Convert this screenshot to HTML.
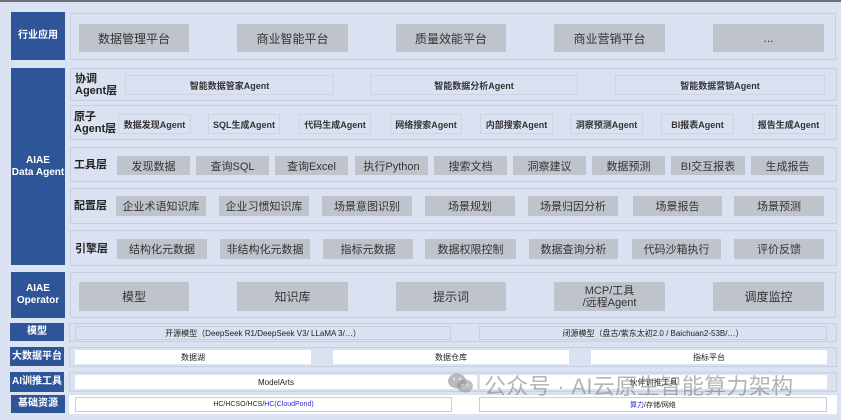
<!DOCTYPE html>
<html><head><meta charset="utf-8"><style>
*{margin:0;padding:0;box-sizing:border-box}
body{width:841px;height:420px;background:#dbe3f2;position:relative;overflow:hidden;font-family:"Liberation Sans","Noto Sans CJK SC",sans-serif;color:#222}
div{position:absolute}
.top{left:0;top:0;width:841px;height:2px;background:#6b6f78}
.L{background:#2e5597;color:#fff;font-weight:bold;font-size:10px;display:flex;align-items:center;justify-content:center;text-align:center;line-height:12px}
.P{border:1px solid #c8cfdc;background:#dae2f1}
.B{background:#bfc3cb;color:#333;display:flex;align-items:center;justify-content:center;text-align:center;font-size:11px}
.big{font-size:12px}
.A{border:1px solid #cdd5e3;display:flex;align-items:center;justify-content:center;font-size:9px;font-weight:bold;color:#333}
.lab{font-weight:bold;font-size:11px;line-height:12px;color:#222}
.W{background:#fff;display:flex;align-items:center;justify-content:center;font-size:8px;color:#222}
.T{border:1px solid #c8cfdc;display:flex;align-items:center;justify-content:center;font-size:8px;color:#222}
.wm{color:rgba(120,120,120,0.55);font-size:22px;white-space:nowrap;letter-spacing:0.3px}
</style></head><body>
<div class="top"></div>

<div class="L" style="left:11px;top:12px;width:54px;height:48px">行业应用</div>
<div class="L" style="left:11px;top:68px;width:54px;height:197px">AIAE<br>Data Agent</div>
<div class="L" style="left:11px;top:272px;width:54px;height:46px">AIAE<br>Operator</div>
<div class="L" style="left:10px;top:323px;width:54px;height:18px">模型</div>
<div class="L" style="left:10px;top:347px;width:54px;height:19px">大数据平台</div>
<div class="L" style="left:10px;top:372px;width:54px;height:20px">AI训推工具</div>
<div class="L" style="left:11px;top:395px;width:54px;height:18px">基础资源</div>

<div class="P" style="left:70px;top:13px;width:766px;height:47px"></div>
<div class="B big" style="left:79px;top:24px;width:110px;height:28px">数据管理平台</div>
<div class="B big" style="left:237px;top:24px;width:111px;height:28px">商业智能平台</div>
<div class="B big" style="left:396px;top:24px;width:110px;height:28px">质量效能平台</div>
<div class="B big" style="left:554px;top:24px;width:111px;height:28px">商业营销平台</div>
<div class="B big" style="left:713px;top:24px;width:111px;height:28px">...</div>

<div class="P" style="left:70px;top:68px;width:767px;height:33px"></div>
<div class="lab" style="left:75px;top:73px">协调<br>Agent层</div>
<div class="A" style="left:125px;top:75px;width:209px;height:20px">智能数据管家Agent</div>
<div class="A" style="left:370px;top:75px;width:208px;height:20px">智能数据分析Agent</div>
<div class="A" style="left:615px;top:75px;width:210px;height:20px">智能数据营销Agent</div>

<div class="P" style="left:70px;top:105px;width:767px;height:35px"></div>
<div class="lab" style="left:74px;top:111px">原子<br>Agent层</div>
<div class="A" style="left:118px;top:114px;width:73px;height:20px">数据发现Agent</div>
<div class="A" style="left:208px;top:114px;width:72px;height:20px">SQL生成Agent</div>
<div class="A" style="left:299px;top:114px;width:72px;height:20px">代码生成Agent</div>
<div class="A" style="left:390px;top:114px;width:72px;height:20px">网络搜索Agent</div>
<div class="A" style="left:480px;top:114px;width:73px;height:20px">内部搜索Agent</div>
<div class="A" style="left:570px;top:114px;width:73px;height:20px">洞察预测Agent</div>
<div class="A" style="left:661px;top:114px;width:73px;height:20px">BI报表Agent</div>
<div class="A" style="left:752px;top:114px;width:73px;height:20px">报告生成Agent</div>

<div class="P" style="left:70px;top:147px;width:767px;height:35px"></div>
<div class="lab" style="left:74px;top:159px">工具层</div>
<div class="B" style="left:117px;top:156px;width:73px;height:19px">发现数据</div>
<div class="B" style="left:196px;top:156px;width:73px;height:19px">查询SQL</div>
<div class="B" style="left:275px;top:156px;width:73px;height:19px">查询Excel</div>
<div class="B" style="left:355px;top:156px;width:73px;height:19px">执行Python</div>
<div class="B" style="left:434px;top:156px;width:73px;height:19px">搜索文档</div>
<div class="B" style="left:513px;top:156px;width:73px;height:19px">洞察建议</div>
<div class="B" style="left:592px;top:156px;width:73px;height:19px">数据预测</div>
<div class="B" style="left:671px;top:156px;width:74px;height:19px">BI交互报表</div>
<div class="B" style="left:751px;top:156px;width:73px;height:19px">生成报告</div>

<div class="P" style="left:70px;top:188px;width:767px;height:36px"></div>
<div class="lab" style="left:74px;top:200px">配置层</div>
<div class="B" style="left:116px;top:196px;width:90px;height:20px">企业术语知识库</div>
<div class="B" style="left:219px;top:196px;width:90px;height:20px">企业习惯知识库</div>
<div class="B" style="left:322px;top:196px;width:90px;height:20px">场景意图识别</div>
<div class="B" style="left:425px;top:196px;width:90px;height:20px">场景规划</div>
<div class="B" style="left:528px;top:196px;width:90px;height:20px">场景归因分析</div>
<div class="B" style="left:633px;top:196px;width:89px;height:20px">场景报告</div>
<div class="B" style="left:734px;top:196px;width:90px;height:20px">场景预测</div>

<div class="P" style="left:70px;top:230px;width:767px;height:36px"></div>
<div class="lab" style="left:75px;top:243px">引擎层</div>
<div class="B" style="left:117px;top:239px;width:90px;height:20px">结构化元数据</div>
<div class="B" style="left:220px;top:239px;width:90px;height:20px">非结构化元数据</div>
<div class="B" style="left:323px;top:239px;width:90px;height:20px">指标元数据</div>
<div class="B" style="left:425px;top:239px;width:91px;height:20px">数据权限控制</div>
<div class="B" style="left:529px;top:239px;width:89px;height:20px">数据查询分析</div>
<div class="B" style="left:632px;top:239px;width:89px;height:20px">代码沙箱执行</div>
<div class="B" style="left:734px;top:239px;width:90px;height:20px">评价反馈</div>

<div class="P" style="left:70px;top:272px;width:766px;height:46px"></div>
<div class="B big" style="left:79px;top:282px;width:110px;height:29px">模型</div>
<div class="B big" style="left:237px;top:282px;width:111px;height:29px">知识库</div>
<div class="B big" style="left:396px;top:282px;width:110px;height:29px">提示词</div>
<div class="B" style="left:554px;top:282px;width:111px;height:29px;line-height:12px">MCP/工具<br>/远程Agent</div>
<div class="B big" style="left:713px;top:282px;width:111px;height:29px">调度监控</div>

<div class="P" style="left:69px;top:323px;width:768px;height:19px"></div>
<div class="T" style="left:75px;top:326px;width:376px;height:14px">开源模型（DeepSeek R1/DeepSeek V3/ LLaMA 3/…）</div>
<div class="T" style="left:479px;top:326px;width:348px;height:14px">闭源模型（盘古/紫东太初2.0 / Baichuan2-53B/…）</div>

<div class="P" style="left:69px;top:347px;width:768px;height:20px"></div>
<div class="W" style="left:75px;top:350px;width:236px;height:14px">数据湖</div>
<div class="W" style="left:333px;top:350px;width:236px;height:14px">数据仓库</div>
<div class="W" style="left:591px;top:350px;width:236px;height:14px">指标平台</div>

<div class="P" style="left:69px;top:372px;width:768px;height:20px"></div>
<div class="W" style="left:75px;top:375px;width:402px;height:14px">ModelArts</div>
<div class="W" style="left:480px;top:375px;width:347px;height:14px">伙伴训推工具</div>

<div style="left:69px;top:395px;width:768px;height:19px;background:#fff"></div>
<div class="T" style="left:75px;top:397px;width:377px;height:15px;font-size:7px">HC/HCSO/HCS/<span style="color:#2a2ae0">HC(CloudPond)</span></div>
<div class="T" style="left:479px;top:397px;width:348px;height:15px;font-size:7px"><span style="color:#2a2ae0">算力</span>/存储/网络</div>

<div style="left:447px;top:372px;width:28px;height:22px">
<svg width="28" height="22" viewBox="0 0 28 22"><ellipse cx="10" cy="9" rx="9" ry="7.5" fill="rgba(130,130,130,0.55)"/><ellipse cx="18" cy="14" rx="8" ry="6.5" fill="rgba(150,150,150,0.6)"/><circle cx="7" cy="7" r="1.2" fill="#dbe3f2"/><circle cx="13" cy="7" r="1.2" fill="#dbe3f2"/><circle cx="15.5" cy="13" r="1" fill="#dbe3f2"/><circle cx="20.5" cy="13" r="1" fill="#dbe3f2"/></svg>
</div>
<div class="wm" style="left:484px;top:369px">公众号 · AI云原生智能算力架构</div>
</body></html>
